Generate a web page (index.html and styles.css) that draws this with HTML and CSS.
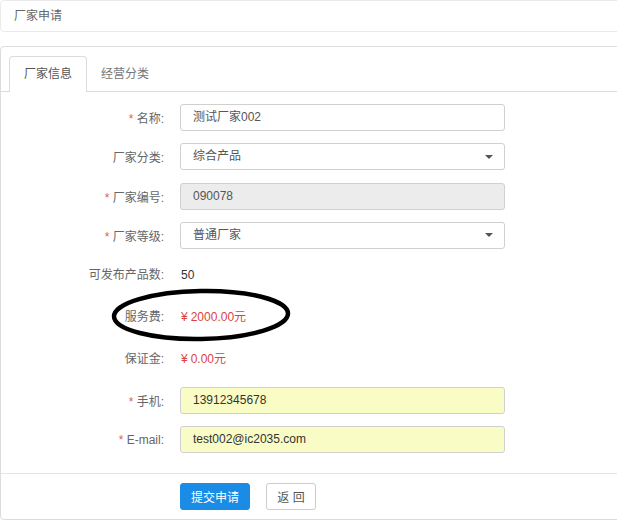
FILE: index.html
```html
<!DOCTYPE html>
<html lang="zh-CN">
<head>
<meta charset="utf-8">
<title>厂家申请</title>
<link rel="stylesheet" href="styles.css">
</head>
<body>
<div class="page">
  <div class="panel head-panel">厂家申请</div>
  <div class="panel main-panel">
    <ul class="tabs">
      <li class="tab active">厂家信息</li>
      <li class="tab">经营分类</li>
    </ul>
    <div class="form">
      <div class="row">
        <label class="label"><span class="req">*</span> 名称:</label>
        <div class="control">测试厂家002</div>
      </div>
      <div class="row">
        <label class="label">厂家分类:</label>
        <div class="control select">综合产品<span class="caret"></span></div>
      </div>
      <div class="row">
        <label class="label"><span class="req">*</span> 厂家编号:</label>
        <div class="control disabled">090078</div>
      </div>
      <div class="row">
        <label class="label"><span class="req">*</span> 厂家等级:</label>
        <div class="control select">普通厂家<span class="caret"></span></div>
      </div>
      <div class="row static">
        <label class="label">可发布产品数:</label>
        <div class="value">50</div>
      </div>
      <div class="row static marked">
        <label class="label">服务费:</label>
        <div class="value price"><span class="yen">¥</span>2000.00元</div>
        <svg class="circle" width="190" height="60" viewBox="0 0 190 60"><ellipse cx="93" cy="29" rx="87" ry="24" fill="none" stroke="#000" stroke-width="4.5" transform="rotate(-1 93 29)"/></svg>
      </div>
      <div class="row static">
        <label class="label">保证金:</label>
        <div class="value price"><span class="yen">¥</span>0.00元</div>
      </div>
      <div class="row">
        <label class="label"><span class="req">*</span> 手机:</label>
        <div class="control filled">13912345678</div>
      </div>
      <div class="row">
        <label class="label"><span class="req">*</span> E-mail:</label>
        <div class="control filled">test002@ic2035.com</div>
      </div>
    </div>
    <div class="footer">
      <button class="btn primary">提交申请</button>
      <button class="btn">返 回</button>
    </div>
  </div>
</div>
</body>
</html>
```

FILE: styles.css
```css
html, body {
  margin: 0;
  padding: 0;
  background: #fff;
  overflow: hidden;
}
body {
  font-family: "Liberation Sans", "Noto Sans CJK SC", sans-serif;
  font-size: 12px;
  color: #555;
}
.page {
  width: 640px;
}
.panel {
  border: 1px solid #e3e3e3;
  border-radius: 4px;
  background: #fff;
}
.head-panel {
  height: 30px;
  line-height: 30px;
  padding-left: 13px;
  color: #666;
  border-color: #ebebeb;
}
.main-panel {
  margin-top: 14px;
  border-color: #dcdcdc;
}
.tabs {
  list-style: none;
  margin: 0;
  padding: 9px 0 0 8px;
  display: flex;
  border-bottom: 1px solid #dcdcdc;
}
.tab {
  height: 34px;
  line-height: 34px;
  padding: 0 14px;
  color: #777;
  border: 1px solid transparent;
  border-bottom: none;
  border-radius: 4px 4px 0 0;
  margin-bottom: -1px;
}
.tab + .tab {
  padding-left: 13px;
}
.tab.active {
  color: #555;
  border-color: #dcdcdc;
  background: #fff;
  height: 35px;
}
.form {
  display: flex;
  flex-direction: column;
  gap: 12.3px;
  padding: 12px 0 20px;
}
.row {
  display: flex;
  align-items: center;
  height: 27px;
  position: relative;
}
.row.static {
  height: 29.6px;
  align-items: flex-start;
  line-height: 20px;
  padding-top: 4px;
  box-sizing: border-box;
}
.label {
  width: 163px;
  text-align: right;
  color: #666;
  flex: none;
  margin-right: 16px;
}
.req {
  color: #e06060;
}
.control {
  box-sizing: border-box;
  width: 325px;
  height: 27px;
  line-height: 25px;
  padding: 0 12px;
  border: 1px solid #d0d0d0;
  border-radius: 3px;
  color: #555;
  display: flex;
  align-items: center;
  justify-content: space-between;
}
.control.disabled {
  background: #ececec;
}
.control.filled {
  background: #fafcc6;
  color: #333;
}
.caret {
  width: 0;
  height: 0;
  border-left: 4px solid transparent;
  border-right: 4px solid transparent;
  border-top: 4px solid #555;
  margin-right: -1px;
}
.value {
  color: #333;
  padding-left: 1px;
}
.value.price {
  color: #d9443f;
}
.yen {
  margin-right: 3px;
}
.circle {
  position: absolute;
  left: 107px;
  top: -17px;
}
.footer {
  border-top: 1px solid #e5e5e5;
  padding: 9px 0 9px 179px;
  display: flex;
  gap: 16px;
}
.btn {
  height: 27px;
  border-radius: 3px;
  font-family: inherit;
  font-size: 12px;
  border: 1px solid #ccc;
  background: #fff;
  color: #555;
  padding: 0;
  cursor: pointer;
}
.btn.primary {
  width: 70px;
  background: #1a8ce6;
  border-color: #1a8ce6;
  color: #fff;
}
.btn:not(.primary) {
  width: 50px;
}
```
